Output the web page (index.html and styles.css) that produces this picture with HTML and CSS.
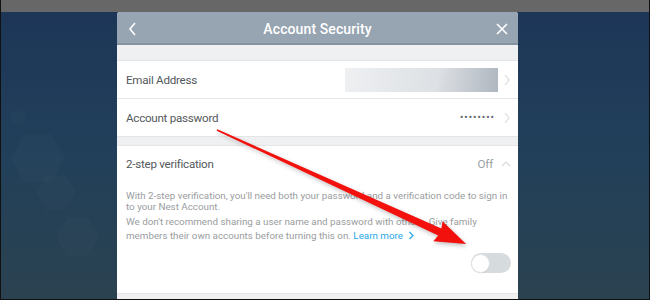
FILE: index.html
```html
<!DOCTYPE html>
<html>
  <head>
    <meta charset="UTF-8">
    <meta name="viewport" content="width=device-width,initial-scale=1">
    <link rel="stylesheet" href="styles.css">
    <title>Account Security</title>
  </head>
  <body>
    <div class="screen">
      <div class="topbar"></div>
      <div class="stage">
        <svg class="hexes" width="120" height="288" viewBox="0 0 120 288">
          <g fill="#ffffff" fill-opacity="0.014">
            <circle cx="17" cy="106" r="8"/>
            <polygon points="64,146 50,170 23,170 10,146 23,122 50,122"/>
            <polygon points="75,181 65,198 45,198 35,181 45,164 65,164"/>
            <polygon points="98,225 87,244 66,244 55,225 66,206 87,206"/>
          </g>
        </svg>
        <div class="modal">
          <div class="modal-head">
            <svg class="head-icon" width="12" height="14" viewBox="0 0 12 14">
              <path d="M8 1 L3 7 L8 13" fill="none" stroke="#fff" stroke-width="1.6"/>
            </svg>
            <span class="modal-title">Account Security</span>
            <svg class="head-icon" width="12" height="14" viewBox="0 0 12 14">
              <path d="M1 2 L11 12 M11 2 L1 12" fill="none" stroke="#fff" stroke-width="1.6"/>
            </svg>
          </div>
          <div class="band"></div>
          <div class="row">
            <span class="label">Email Address</span>
            <span class="value-box"></span>
            <svg class="chev" width="8" height="12" viewBox="0 0 8 12">
              <path d="M2 1 L6 6 L2 11" fill="none" stroke="#d9dbde" stroke-width="1.2"/>
            </svg>
          </div>
          <div class="row">
            <span class="label">Account password</span>
            <span class="dots">&bull;&bull;&bull;&bull;&bull;&bull;&bull;&bull;</span>
            <svg class="chev" width="8" height="12" viewBox="0 0 8 12">
              <path d="M2 1 L6 6 L2 11" fill="none" stroke="#d9dbde" stroke-width="1.2"/>
            </svg>
          </div>
          <div class="band band-small"></div>
          <div class="section">
            <div class="section-head">
              <span class="label">2-step verification</span>
              <span class="state">Off</span>
              <svg class="chev" width="10" height="8" viewBox="0 0 10 8">
                <path d="M1 6 L5 2 L9 6" fill="none" stroke="#d9dbde" stroke-width="1.2"/>
              </svg>
            </div>
            <p class="info info-first">With 2-step verification, you'll need both your password and a verification code to sign in to your Nest Account.</p>
            <p class="info">We don't recommend sharing a user name and password with others. Give family members their own accounts before turning this on. <a class="learn" href="#">Learn more</a><svg class="learn-chev" width="8" height="9" viewBox="0 0 8 9"><path d="M2.5 1 L6 4.5 L2.5 8" fill="none" stroke="#29a6e6" stroke-width="1.2"/></svg></p>
            <div class="toggle-row">
              <span class="toggle"><span class="knob"></span></span>
            </div>
          </div>
          <div class="band band-bottom"></div>
        </div>
      </div>
      <svg class="arrow" width="650" height="300" viewBox="0 0 650 300">
        <g transform="translate(216 130) rotate(24.6)">
          <polygon points="0,-0.8 245,-3.8 243,-11 274,0 243,11 245,3.8 0,0.8" fill="#f2110d"/>
        </g>
      </svg>
    </div>
  </body>
</html>
```

FILE: styles.css
```css
html, body {
  margin: 0;
  padding: 0
}

body {
  font-family: Roboto, "Liberation Sans", sans-serif;
  background: #111
}

.screen {
  position: relative;
  width: 650px;
  height: 300px;
  box-sizing: border-box;
  border: 1px solid #111;
  border-top: none;
  display: flex;
  flex-direction: column;
  overflow: hidden
}

.topbar {
  height: 12px;
  background-color: #676767;
  flex-shrink: 0
}

.stage {
  position: relative;
  flex: 1;
  background: linear-gradient(180deg, #1d3658 0%, #22405a 50%, #2b4250 100%);
  padding-left: 116px
}

.hexes {
  position: absolute;
  left: 0;
  top: 0
}

.modal {
  position: relative;
  width: 401px;
  background-color: #fff;
  border-radius: 3px 3px 0 0;
  overflow: hidden
}

.modal-head {
  height: 29px;
  padding: 2px 10px 0 10px;
  background-color: #97a4b1;
  border-bottom: 2px solid #8592a0;
  display: flex;
  align-items: center;
  justify-content: space-between
}

.modal-title {
  color: #fff;
  font-size: 14px;
  font-weight: 500;
  letter-spacing: 0.1px
}

.head-icon {
  display: block
}

.band {
  height: 15px;
  background-color: #eef0f2;
  border-bottom: 1px solid #e3e5e8
}

.band-small {
  height: 8px;
  border-top: 1px solid #e3e5e8
}

.band-bottom {
  height: 8px;
  border-top: 1px solid #e3e5e8;
  border-bottom: none
}

.row {
  height: 37px;
  display: flex;
  align-items: center;
  padding: 0 7px 0 9px
}

.row + .row {
  border-top: 1px solid #e3e5e8
}

.label {
  font-size: 11.6px;
  letter-spacing: -0.25px;
  color: #53585c;
  flex: 1
}

.value-box {
  width: 153px;
  height: 24px;
  background: linear-gradient(100deg, #eef0f2 0%, #dde0e4 60%, #aeb6bf 100%);
  margin-right: 5px
}

.dots {
  font-size: 10px;
  color: #5c636b;
  letter-spacing: 1px;
  margin-right: 8px
}

.chev {
  display: block
}

.section {
  padding: 0 7px 20px 9px
}

.section-head {
  height: 36px;
  display: flex;
  align-items: center
}

.state {
  font-size: 11.6px;
  letter-spacing: -0.2px;
  color: #9b9ea1;
  margin-right: 8px
}

.info {
  margin: 0;
  font-size: 9.8px;
  line-height: 14px;
  color: #9a9da0
}

.info-first {
  line-height: 11px;
  margin: 8px 0 3px
}

.learn {
  color: #29a6e6;
  text-decoration: none
}

.learn-chev {
  margin-left: 4px;
  vertical-align: -1px
}

.toggle-row {
  display: flex;
  justify-content: flex-end;
  margin-top: 10px
}

.toggle {
  width: 40px;
  height: 20px;
  border-radius: 10px;
  background-color: #d6dbde;
  display: flex;
  align-items: center
}

.knob {
  width: 19px;
  height: 19px;
  border-radius: 50%;
  background-color: #fff;
  border: 1px solid #e0e3e5;
  box-sizing: border-box;
  box-shadow: 0 1px 1px rgba(0, 0, 0, 0.05)
}

.arrow {
  position: absolute;
  left: 0;
  top: 0;
  pointer-events: none;
  filter: drop-shadow(1px 2px 2px rgba(0, 0, 0, 0.25))
}
```
